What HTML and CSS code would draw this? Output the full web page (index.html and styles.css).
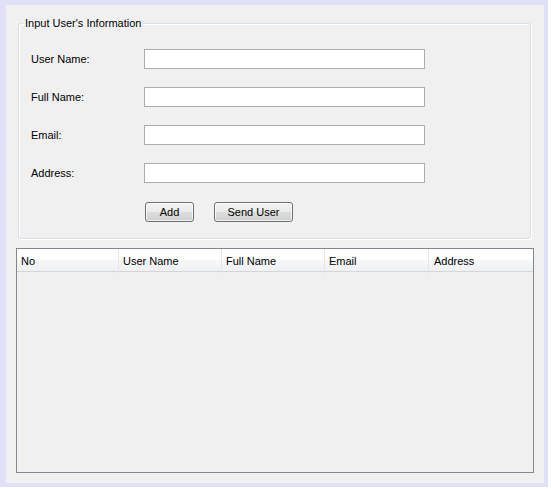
FILE: index.html
```html
<!DOCTYPE html>
<html>
<head>
<meta charset="utf-8">
<link rel="stylesheet" href="styles.css">
</head>
<body>
<div class="window">
  <fieldset class="group">
    <legend class="group-title">Input User's Information</legend>
    <div class="form">
      <label class="label">User Name:</label>
      <input class="field" type="text">
      <label class="label">Full Name:</label>
      <input class="field" type="text">
      <label class="label">Email:</label>
      <input class="field" type="text">
      <label class="label">Address:</label>
      <input class="field" type="text">
      <div class="buttons">
        <button class="btn btn-add">Add</button>
        <button class="btn btn-send">Send User</button>
      </div>
    </div>
  </fieldset>
  <div class="table">
    <div class="thead">
      <div class="th">No</div>
      <div class="th">User Name</div>
      <div class="th">Full Name</div>
      <div class="th">Email</div>
      <div class="th last">Address</div>
    </div>
  </div>
</div>
</body>
</html>
```
FILE: styles.css
```css
html, body {
  margin: 0;
  padding: 0;
  background: #ffffff;
}
body {
  font-family: "Liberation Sans", Arial, sans-serif;
  font-size: 11px;
  color: #000;
}
.window {
  box-sizing: border-box;
  width: 548px;
  height: 487px;
  border-style: solid;
  border-color: #e0e0f8;
  border-width: 5px 4px 4px 6px;
  background: #f0f0f0;
  padding: 11px 10px 0 10px;
  display: flex;
  flex-direction: column;
}
.group {
  margin: 0 3px 0 2px;
  padding: 19px 0 17px 0;
  min-width: 0;
  border: 1px solid #d5dfe5;
  border-radius: 3px;
  box-shadow: inset 1px 1px 0 #ffffff, 1px 1px 0 #ffffff;
}
.group-title {
  margin-left: 4px;
  padding: 0 2px;
  line-height: 14px;
  height: 14px;
}
.form {
  margin-left: 12px;
  display: grid;
  grid-template-columns: 113px 281px;
  grid-auto-rows: 20px;
  row-gap: 18px;
  align-items: center;
}
.label {
  line-height: 20px;
}
.field {
  box-sizing: border-box;
  width: 281px;
  height: 20px;
  margin: 0;
  border: 1px solid #abadb3;
  background: #fff;
  padding: 0 3px;
  font: inherit;
  outline: none;
}
.buttons {
  grid-column: 2;
  display: flex;
  gap: 20px;
  padding-left: 1px;
  margin-top: 1px;
}
.btn {
  box-sizing: border-box;
  height: 20px;
  margin: 0;
  padding: 0;
  border: 1px solid #707070;
  border-radius: 3px;
  background: linear-gradient(#f2f2f2 0%, #ebebeb 50%, #dddddd 50%, #cfcfcf 100%);
  box-shadow: inset 0 0 0 1px rgba(255,255,255,0.7);
  font: inherit;
  color: #000;
}
.btn-add { width: 49px; }
.btn-send { width: 79px; }
.table {
  margin-top: 9px;
  height: 225px;
  box-sizing: border-box;
  border: 1px solid #828790;
  background: #f0f0f0;
}
.thead {
  display: grid;
  grid-template-columns: 102px 103px 103px 104px 1fr;
  height: 23px;
  background: linear-gradient(#ffffff 0%, #ffffff 45%, #f5f6f7 55%, #eef0f2 100%);
  border-bottom: 1px solid #d5d5d5;
  box-sizing: border-box;
}
.th {
  border-right: 1px solid #e3e5e8;
  padding-left: 4px;
  line-height: 25px;
}
.th.last {
  border-right: none;
  padding-left: 5px;
}
```
